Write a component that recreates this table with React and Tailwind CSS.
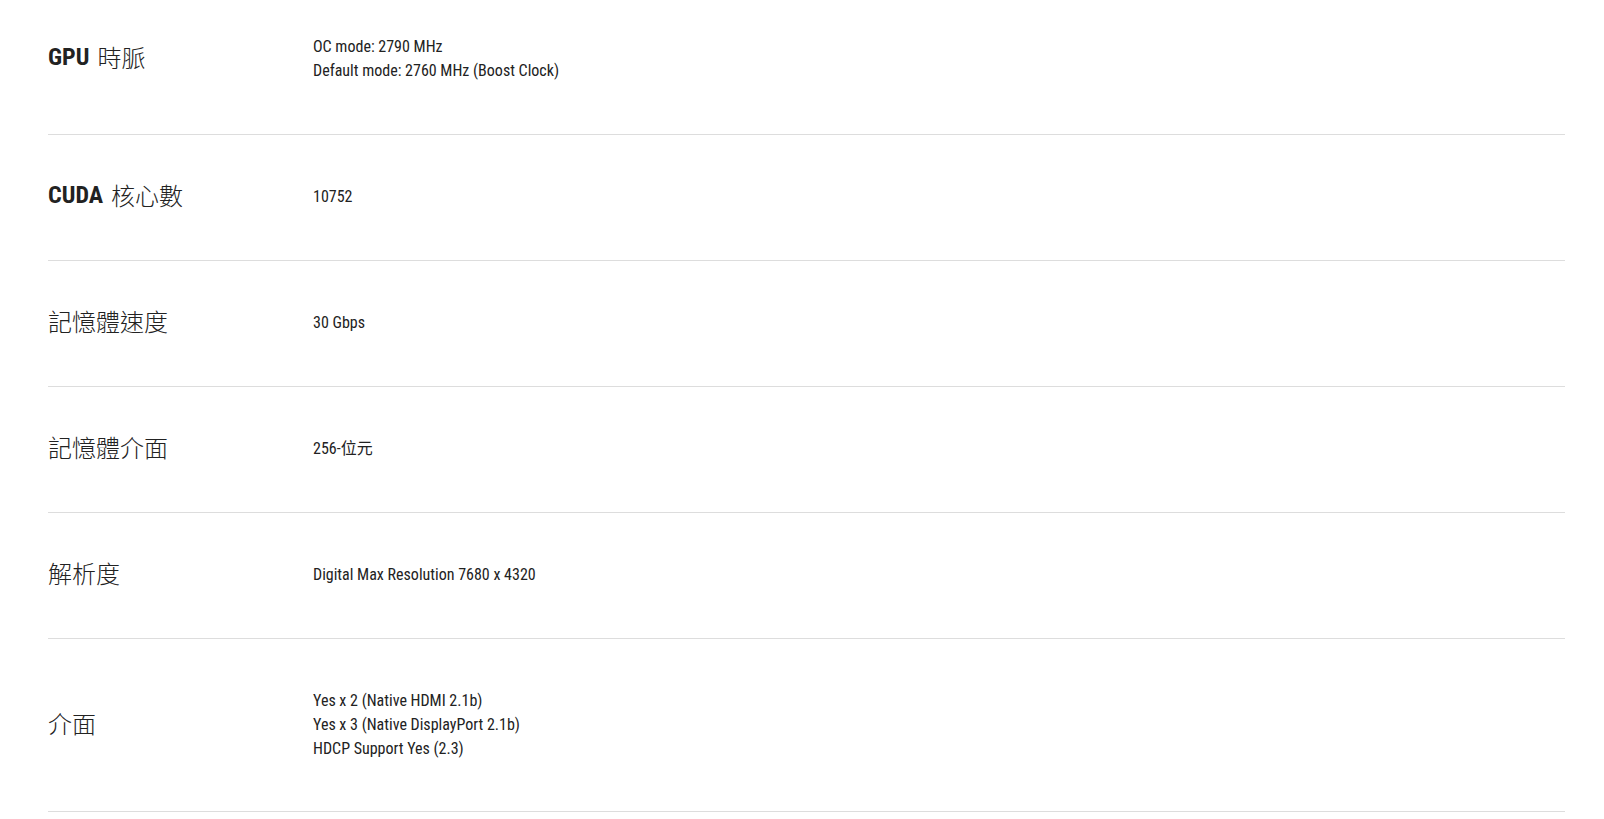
export default function App() {
  const rows = [
    { b: "GPU", l: "時脈", v: ["OC mode: 2790 MHz", "Default mode: 2760 MHz (Boost Clock)"], first: true },
    { b: "CUDA", l: "核心數", v: ["10752"] },
    { l: "記憶體速度", v: ["30 Gbps"] },
    { l: "記憶體介面", v: ["256-位元"] },
    { l: "解析度", v: ["Digital Max Resolution 7680 x 4320"] },
    { l: "介面", v: ["Yes x 2 (Native HDMI 2.1b)", "Yes x 3 (Native DisplayPort 2.1b)", "HDCP Support Yes (2.3)"], last: true },
  ];
  const font = { fontFamily: '"Roboto Condensed", "Liberation Sans Narrow", "DejaVu Sans Condensed", "Noto Sans CJK TC", sans-serif' };
  return (
    <div className="min-h-screen w-full bg-white pl-[48px] pr-[39px] text-[#222]" style={font}>
      {rows.map((r, i) => (
        <div
          key={i}
          className={
            "flex items-center border-b border-[#dddddd] " +
            (r.first ? "pt-[35px] " : "pt-[50px] ") +
            (r.last ? "pb-[50px]" : "pb-[51px]")
          }
        >
          <div className="w-[265px] shrink-0 h-[24px] -mt-[4px] flex items-center text-[24px] leading-[24px] whitespace-nowrap">
            {r.b && <span className="font-bold mr-[8px]">{r.b}</span>}
            <span style={{ fontFamily: '"Noto Sans CJK TC", sans-serif', fontWeight: 300 }}>{r.l}</span>
          </div>
          <div className="text-[16px] leading-[24px]">
            {r.v.map((t, j) => (
              <div key={j}>{t}</div>
            ))}
          </div>
        </div>
      ))}
    </div>
  );
}
